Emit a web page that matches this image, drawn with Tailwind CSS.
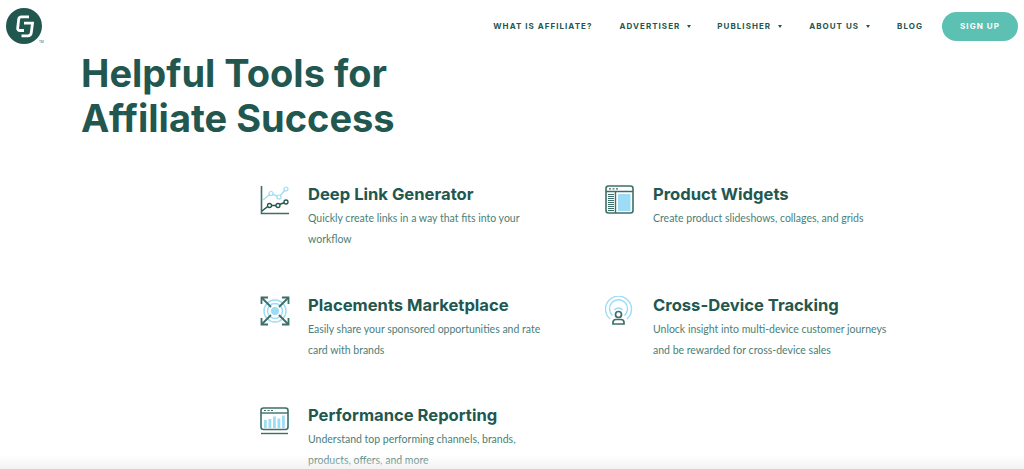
<!DOCTYPE html>
<html lang="en">
<head>
  <meta charset="UTF-8" />
  <meta name="viewport" content="width=device-width, initial-scale=1.0" />
  <title>CJ Affiliate</title>
  <script src="https://cdn.jsdelivr.net/npm/@tailwindcss/browser@4"></script>
</head>
<body class="relative h-[469px] overflow-hidden bg-white font-['Inter',sans-serif] text-[#22574f]">
  <header class="flex h-[52px] items-center justify-between pl-[6px] pr-[6px]">
    <a href="#" class="relative block h-9 w-9">
      <svg viewBox="0 0 36 36" class="h-9 w-9">
        <circle cx="18" cy="18" r="18" fill="#22574f" />
        <path d="M23 8.8H15.5Q13 8.8 12.7 11.2L11.7 19.8Q11.4 22.5 14 22.5H18" fill="none" stroke="#fff" stroke-width="2.8" />
        <path d="M18 15.2H26.5L25.3 24.6Q24.9 27.8 21.8 27.8H15.5" fill="none" stroke="#fff" stroke-width="2.8" />
      </svg>
      <span class="absolute left-[33px] top-[33px] text-[3px] leading-none">TM</span>
    </a>
    <nav class="flex items-center text-[8px] font-bold tracking-[0.13em]">
      <a href="#" class="mr-[27px]">WHAT IS AFFILIATE?</a>
      <a href="#" class="mr-[26px] flex items-center">ADVERTISER<span class="ml-[7px] h-0 w-0 border-x-[2.5px] border-t-[3px] border-x-transparent border-t-[#22574f]"></span></a>
      <a href="#" class="mr-[27px] flex items-center">PUBLISHER<span class="ml-[7px] h-0 w-0 border-x-[2.5px] border-t-[3px] border-x-transparent border-t-[#22574f]"></span></a>
      <a href="#" class="mr-[27px] flex items-center">ABOUT US<span class="ml-[7px] h-0 w-0 border-x-[2.5px] border-t-[3px] border-x-transparent border-t-[#22574f]"></span></a>
      <a href="#" class="mr-[19px]">BLOG</a>
      <a href="#" class="flex h-[29px] w-[76px] items-center justify-center rounded-full bg-[#5cc1b3] text-white">SIGN UP</a>
    </nav>
  </header>

  <main>
    <h1 class="ml-[81px] mt-[-1px] text-[38px] font-bold leading-[45px]">Helpful Tools for<br />Affiliate Success</h1>

    <section class="ml-[260px] mt-[43px] grid w-[690px] grid-cols-2">
      <div class="flex h-[110.6px]">
        <svg viewBox="0 0 30 30" class="mr-[18px] mt-[1px] h-[30px] w-[30px] shrink-0">
          <path d="M1.5 1V28.5H29" fill="none" stroke="#3c6f68" stroke-width="1.6" />
          <path d="M3 15L11 8.5L19 12L26 4" fill="none" stroke="#9ddcf5" stroke-width="1.4" />
          <circle cx="11" cy="8.5" r="2" fill="#fff" stroke="#9ddcf5" stroke-width="1.2" />
          <circle cx="19" cy="12" r="2" fill="#fff" stroke="#9ddcf5" stroke-width="1.2" />
          <circle cx="26" cy="4" r="2" fill="#fff" stroke="#9ddcf5" stroke-width="1.2" />
          <path d="M2 26L9 20.5H17L26 17" fill="none" stroke="#22574f" stroke-width="1.5" />
          <circle cx="9.5" cy="20.5" r="2" fill="#fff" stroke="#22574f" stroke-width="1.3" />
          <circle cx="18" cy="20.5" r="2" fill="#fff" stroke="#22574f" stroke-width="1.3" />
          <circle cx="26" cy="17" r="2" fill="#fff" stroke="#22574f" stroke-width="1.3" />
        </svg>
        <div>
          <h2 class="mt-[-2px] text-[16.6px] font-bold leading-[24px]">Deep Link Generator</h2>
          <p class="mt-[2px] w-[240px] font-['Lato',sans-serif] text-[10.5px] leading-[21px] text-[#4a8077]">Quickly create links in a way that fits into your workflow</p>
        </div>
      </div>
      <div class="flex h-[110.6px]">
        <svg viewBox="0 0 30 30" class="mr-[18px] mt-[1px] h-[30px] w-[30px] shrink-0">
          <rect x="1" y="1" width="27" height="27" rx="2.5" fill="#fff" stroke="#3c6f68" stroke-width="1.6" />
          <path d="M1 6.5H28M10.5 6.5V28" stroke="#3c6f68" stroke-width="1.4" />
          <path d="M4 3.8H6M7.5 3.8H9.5M11 3.8H13" stroke="#3c6f68" stroke-width="1.2" />
          <path d="M3 9.5H9M3 11.5H9M3 13.5H9M3 15.5H9M3 17.5H9M3 19.5H9M3 21.5H9M3 23.5H9M3 25.5H9" stroke="#3c6f68" stroke-width="1" />
          <rect x="13" y="9" width="12.5" height="17" fill="#9ddcf5" />
        </svg>
        <div>
          <h2 class="mt-[-2px] text-[16.6px] font-bold leading-[24px]">Product Widgets</h2>
          <p class="mt-[2px] w-[240px] font-['Lato',sans-serif] text-[10.5px] leading-[21px] text-[#4a8077]">Create product slideshows, collages, and grids</p>
        </div>
      </div>
      <div class="flex h-[110.6px]">
        <svg viewBox="0 0 30 30" class="mr-[18px] mt-[1px] h-[30px] w-[30px] shrink-0">
          <circle cx="15" cy="15" r="11" fill="none" stroke="#9ddcf5" stroke-width="1.4" />
          <circle cx="15" cy="15" r="7.5" fill="none" stroke="#9ddcf5" stroke-width="1.4" />
          <circle cx="15" cy="15" r="4" fill="#9ddcf5" />
          <path d="M1.5 1.5L11 11M28.5 1.5L19 11M1.5 28.5L11 19M28.5 28.5L19 19" stroke="#3c6f68" stroke-width="1.8" />
          <path d="M1.5 8V1.5H8M22 1.5H28.5V8M1.5 22V28.5H8M22 28.5H28.5V22" fill="none" stroke="#3c6f68" stroke-width="1.8" />
        </svg>
        <div>
          <h2 class="mt-[-2px] text-[16.6px] font-bold leading-[24px]">Placements Marketplace</h2>
          <p class="mt-[2px] w-[240px] font-['Lato',sans-serif] text-[10.5px] leading-[21px] text-[#4a8077]">Easily share your sponsored opportunities and rate card with brands</p>
        </div>
      </div>
      <div class="flex h-[110.6px]">
        <svg viewBox="0 0 30 30" class="mr-[18px] mt-[1px] h-[30px] w-[30px] shrink-0">
          <path d="M5 23A13 13 0 1 1 22 23" fill="none" stroke="#9ddcf5" stroke-width="1.4" />
          <path d="M7.5 19.5A9 9 0 1 1 19.5 19.5" fill="none" stroke="#9ddcf5" stroke-width="1.4" />
          <path d="M9.5 14A5 5 0 0 1 17.5 14" fill="none" stroke="#9ddcf5" stroke-width="1.4" />
          <circle cx="13.5" cy="18.5" r="3" fill="#fff" stroke="#3c6f68" stroke-width="1.7" />
          <path d="M8 28V26.5Q8 23.5 11 23.5H16Q19 23.5 19 26.5V28Z" fill="#fff" stroke="#3c6f68" stroke-width="1.7" />
        </svg>
        <div>
          <h2 class="mt-[-2px] text-[16.6px] font-bold leading-[24px]">Cross-Device Tracking</h2>
          <p class="mt-[2px] w-[240px] font-['Lato',sans-serif] text-[10.5px] leading-[21px] text-[#4a8077]">Unlock insight into multi-device customer journeys and be rewarded for cross-device sales</p>
        </div>
      </div>
      <div class="flex h-[110.6px]">
        <svg viewBox="0 0 30 30" class="mr-[18px] mt-[1px] h-[30px] w-[30px] shrink-0">
          <rect x="1" y="2" width="27" height="21.5" rx="2.5" fill="#fff" stroke="#3c6f68" stroke-width="1.6" />
          <path d="M1 7H28" stroke="#3c6f68" stroke-width="1.4" />
          <path d="M4 4.5H6M7.5 4.5H9.5M11 4.5H13" stroke="#3c6f68" stroke-width="1.2" />
          <path d="M4 14h2.8v8H4zM8.5 13h2.8v9H8.5zM13 10.5h2.8V22H13zM17.5 12.5h2.8V22H17.5zM22 9.5h2.8V22H22z" fill="#9ddcf5" />
          <path d="M1 27.5H28" stroke="#3c6f68" stroke-width="1.4" />
        </svg>
        <div>
          <h2 class="mt-[-2px] text-[16.6px] font-bold leading-[24px]">Performance Reporting</h2>
          <p class="mt-[2px] w-[240px] font-['Lato',sans-serif] text-[10.5px] leading-[21px] text-[#4a8077]">Understand top performing channels, brands, products, offers, and more</p>
        </div>
      </div>
    </section>
  </main>

  <div class="pointer-events-none absolute inset-x-0 bottom-0 h-[14px] bg-gradient-to-b from-white/0 to-[#ececec]/70"></div>
</body>
</html>
